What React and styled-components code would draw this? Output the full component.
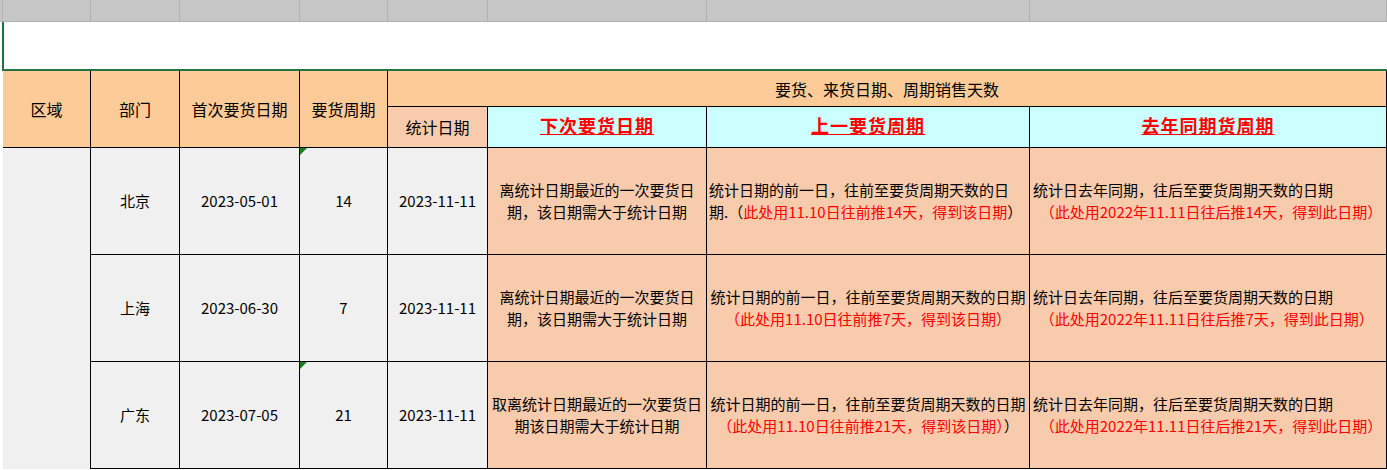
import React from "react";
import styled, { createGlobalStyle } from "styled-components";

const G = createGlobalStyle`
  body{margin:0;background:#fff;font-family:"Noto Sans CJK SC","Noto Sans",sans-serif;font-size:15px;color:#000;overflow:hidden;}
`;
const COLS = "88px 89px 120px 88px 100px 219px 323px 357px";
const TopBar = styled.div`
  display:grid;grid-template-columns:3px ${COLS};height:22px;background:#c6c6c6;border-bottom:1px solid #b0b0b0;box-sizing:border-box;
  & > div{border-right:1px solid #b0b0b0;}
`;
const Frame = styled.div`
  height:47px;margin-left:2px;border-left:2px solid #217346;border-bottom:2px solid #217346;background:#fff;
`;
const Table = styled.div`
  display:grid;grid-template-columns:${COLS};grid-template-rows:36px 41px 107px 107px 107px;margin-left:3px;
`;
const Cell = styled.div`
  position:relative;box-sizing:border-box;border-right:1px solid #000;border-bottom:1px solid #000;
  background:${p=>p.$bg||"#f0f0f0"};display:flex;flex-direction:column;justify-content:center;
  align-items:${p=>p.$left?"flex-start":"center"};text-align:${p=>p.$left?"left":"center"};
  padding:0 ${p=>p.$pad||0}px;line-height:22px;white-space:nowrap;
  font-size:${p=>p.$fs||15}px;
  grid-column:${p=>p.$col||"auto"};grid-row:${p=>p.$row||"auto"};
  ${p=>p.$noBottom&&"border-bottom:none;"}
`;
const Title = styled.span`
  color:#ff0000;font-weight:bold;font-size:18px;text-decoration:underline;letter-spacing:1px;
  font-family:"DejaVu Serif","Noto Sans CJK SC",serif;
`;
const Red = styled.span`color:#ff0000;`;
const Tri = styled.i`
  position:absolute;left:0;top:0;width:0;height:0;border-top:7px solid #1a7f1a;border-right:7px solid transparent;
`;
const OR="#fccb98", PK="#f8cbad", CY="#ccffff";

const rows=[
  {d:"北京",f:"2023-05-01",c:"14",tri:true,
   a:<>离统计日期最近的一次要货日<br/>期，该日期需大于统计日期</>,
   b:<span>统计日期的前一日，往前至要货周期天数的日<br/>期.（<Red>此处用11.10日往前推14天，得到该日期</Red>）</span>,
   e:"2022年11.11日往后推14天，得到此日期"},
  {d:"上海",f:"2023-06-30",c:"7",
   a:<>离统计日期最近的一次要货日<br/>期，该日期需大于统计日期</>,
   b:<>统计日期的前一日，往前至要货周期天数的日期<br/><Red>（此处用11.10日往前推7天，得到该日期）</Red></>,
   e:"2022年11.11日往后推7天，得到此日期"},
  {d:"广东",f:"2023-07-05",c:"21",tri:true,
   a:<>取离统计日期最近的一次要货日<br/>期该日期需大于统计日期</>,
   b:<>统计日期的前一日，往前至要货周期天数的日期<br/><span><Red>（此处用11.10日往前推21天，得到该日期）</Red>）</span></>,
   e:"2022年11.11日往后推21天，得到此日期"},
];

export default function App(){
  return <>
    <G/>
    <TopBar>{Array.from({length:9}).map((_,i)=><div key={i}/>)}</TopBar>
    <Frame/>
    <Table>
      <Cell $bg={OR} $row="1 / 3" $col="1" $fs={16}>区域</Cell>
      <Cell $bg={OR} $row="1 / 3" $col="2" $fs={16}>部门</Cell>
      <Cell $bg={OR} $row="1 / 3" $col="3" $fs={16}>首次要货日期</Cell>
      <Cell $bg={OR} $row="1 / 3" $col="4" $fs={16}>要货周期</Cell>
      <Cell $bg={OR} $row="1" $col="5 / 9" $fs={16}>要货、来货日期、周期销售天数</Cell>
      <Cell $bg={PK} $fs={16}>统计日期</Cell>
      <Cell $bg={CY}><Title>下次要货日期</Title></Cell>
      <Cell $bg={CY}><Title>上一要货周期</Title></Cell>
      <Cell $bg={CY}><Title>去年同期货周期</Title></Cell>
      <Cell $row="3 / 6" $col="1" $noBottom/>
      {rows.map((r,i)=><React.Fragment key={i}>
        <Cell $col="2">{r.d}</Cell>
        <Cell>{r.f}</Cell>
        <Cell>{r.c}{r.tri&&<Tri/>}</Cell>
        <Cell>2023-11-11</Cell>
        <Cell $bg={PK}>{r.a}</Cell>
        <Cell $bg={PK} $left={i===0} $pad={2}>{r.b}</Cell>
        <Cell $bg={PK} $left $pad={3}><span>统计日去年同期，往后至要货周期天数的日期</span><Red>&nbsp;&nbsp;（此处用{r.e}）</Red></Cell>
      </React.Fragment>)}
    </Table>
  </>;
}
